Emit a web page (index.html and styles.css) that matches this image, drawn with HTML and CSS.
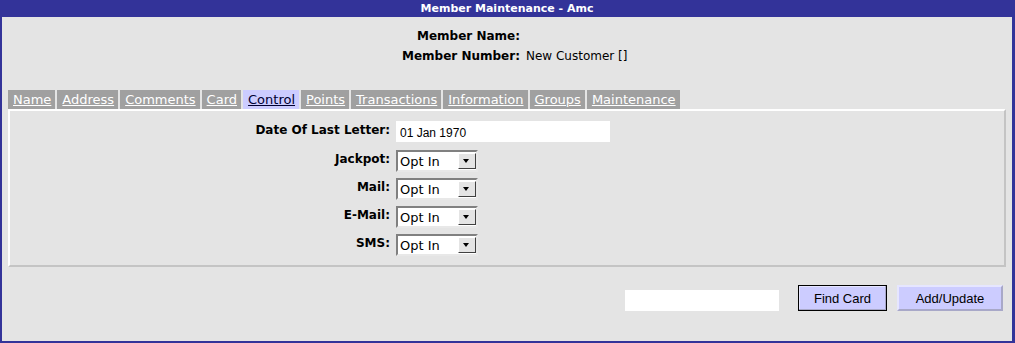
FILE: index.html
```html
<!DOCTYPE html>
<html lang="en">
<head>
    <meta charset="UTF-8">
    <title>Member Maintenance - Amc</title>
    <link rel="stylesheet" href="styles.css">
</head>
<body>
    <div class="frame">
        <div class="titlebar">Member Maintenance - Amc</div>

        <div class="member">
            <span class="label">Member Name:</span><span class="value"></span>
            <span class="label">Member Number:</span><span class="value">New Customer []</span>
        </div>

        <div class="tabs">
            <a href="#" class="tab">Name</a>
            <a href="#" class="tab">Address</a>
            <a href="#" class="tab">Comments</a>
            <a href="#" class="tab">Card</a>
            <a href="#" class="tab active">Control</a>
            <a href="#" class="tab">Points</a>
            <a href="#" class="tab">Transactions</a>
            <a href="#" class="tab">Information</a>
            <a href="#" class="tab">Groups</a>
            <a href="#" class="tab">Maintenance</a>
        </div>

        <div class="panel">
            <div class="form">
                <label for="lastletter">Date Of Last Letter:</label>
                <div class="first"><input type="text" id="lastletter" class="textbox" value="01 Jan 1970"></div>

                <label for="jackpot">Jackpot:</label>
                <div class="selectwrap">
                    <select id="jackpot"><option>Opt In</option><option>Opt Out</option></select>
                    <span class="arrow"></span>
                </div>

                <label for="mail">Mail:</label>
                <div class="selectwrap">
                    <select id="mail"><option>Opt In</option><option>Opt Out</option></select>
                    <span class="arrow"></span>
                </div>

                <label for="email">E-Mail:</label>
                <div class="selectwrap">
                    <select id="email"><option>Opt In</option><option>Opt Out</option></select>
                    <span class="arrow"></span>
                </div>

                <label for="sms">SMS:</label>
                <div class="selectwrap">
                    <select id="sms"><option>Opt In</option><option>Opt Out</option></select>
                    <span class="arrow"></span>
                </div>
            </div>
        </div>

        <div class="actions">
            <input type="text" class="cardbox">
            <button class="btn focused">Find Card</button>
            <button class="btn">Add/Update</button>
        </div>
    </div>
</body>
</html>
```

FILE: styles.css
```css
body {
    margin: 0;
    font-family: "DejaVu Sans", Verdana, sans-serif;
    font-size: 12px;
    color: #000;
    background: #fff;
}
.frame {
    width: 1015px;
    height: 343px;
    box-sizing: border-box;
    background: #e4e4e4;
    border-left: 2px solid #333399;
    border-right: 3px solid #333399;
    border-bottom: 2px solid #333399;
}
.titlebar {
    height: 17px;
    line-height: 17px;
    background: #333399;
    color: #fff;
    font-weight: bold;
    font-size: 11px;
    text-align: center;
}
.member {
    display: grid;
    grid-template-columns: auto 110px;
    justify-content: center;
    align-content: start;
    column-gap: 6px;
    row-gap: 4px;
    padding: 11px 0 0 24px;
    height: 62px;
    box-sizing: border-box;
    line-height: 16px;
}
.member .label {
    font-weight: bold;
    text-align: right;
}
.tabs {
    display: flex;
    gap: 2px;
    padding-left: 6px;
    margin-top: 11px;
}
.tab {
    display: block;
    height: 19px;
    line-height: 20px;
    padding: 0 4px 0 5px;
    background: #a0a0a0;
    color: #fff;
    font-size: 13px;
}
.tab.active {
    background: #ccccff;
    color: #000033;
}
.panel {
    margin: 0 6px 0 6px;
    height: 158px;
    box-sizing: border-box;
    border-top: 2px solid #fff;
    border-left: 2px solid #fff;
    border-right: 2px solid #c4c4c4;
    border-bottom: 2px solid #c4c4c4;
    padding-top: 10px;
}
.form {
    display: grid;
    grid-template-columns: 380px auto;
    column-gap: 6px;
    row-gap: 6px;
    align-items: start;
}
.form label {
    font-weight: bold;
    text-align: right;
    line-height: 16px;
    padding-top: 1px;
}
.first {
    margin-bottom: 2px;
}
.textbox {
    width: 214px;
    height: 21px;
    box-sizing: border-box;
    border: none;
    padding: 2px 4px 0;
    font-family: "Liberation Sans", Arial, sans-serif;
    font-size: 12px;
    background: #fff;
}
.selectwrap {
    position: relative;
    width: 82px;
    height: 22px;
}
.selectwrap select {
    appearance: none;
    -webkit-appearance: none;
    width: 82px;
    height: 22px;
    box-sizing: border-box;
    margin: 0;
    padding: 1px 0 0 2px;
    border-top: 2px solid #808080;
    border-left: 2px solid #808080;
    border-right: 2px solid #e8e8e8;
    border-bottom: 2px solid #e8e8e8;
    border-radius: 0;
    background: #fff;
    font-family: "DejaVu Sans", Verdana, sans-serif;
    font-size: 13px;
    color: #000;
}
.arrow {
    position: absolute;
    top: 3px;
    right: 2px;
    width: 18px;
    height: 16px;
    box-sizing: border-box;
    background: #e4e4e4;
    border-top: 1px solid #fff;
    border-left: 1px solid #fff;
    border-right: 1px solid #404040;
    border-bottom: 1px solid #404040;
    pointer-events: none;
}
.arrow::after {
    content: "";
    position: absolute;
    left: 4px;
    top: 5px;
    border-left: 3.5px solid transparent;
    border-right: 3.5px solid transparent;
    border-top: 4px solid #000;
}
.actions {
    display: flex;
    justify-content: flex-end;
    align-items: flex-end;
    padding: 18px 9px 0 0;
}
.cardbox {
    width: 154px;
    height: 21px;
    box-sizing: border-box;
    border: none;
    background: #fff;
    margin-right: 19px;
}
.btn {
    height: 26px;
    box-sizing: border-box;
    background: #ccccff;
    font-family: "Liberation Sans", Arial, sans-serif;
    font-size: 13px;
    color: #000;
    padding: 0;
    width: 106px;
    border-top: 2px solid #e6e6ff;
    border-left: 2px solid #e6e6ff;
    border-right: 2px solid #a8a8c8;
    border-bottom: 2px solid #a8a8c8;
}
.btn.focused {
    width: 89px;
    margin-right: 10px;
    border: 1px solid #000;
    box-shadow: inset -1px -1px 0 #a8a8c8, inset 1px 1px 0 #e6e6ff;
}
```
